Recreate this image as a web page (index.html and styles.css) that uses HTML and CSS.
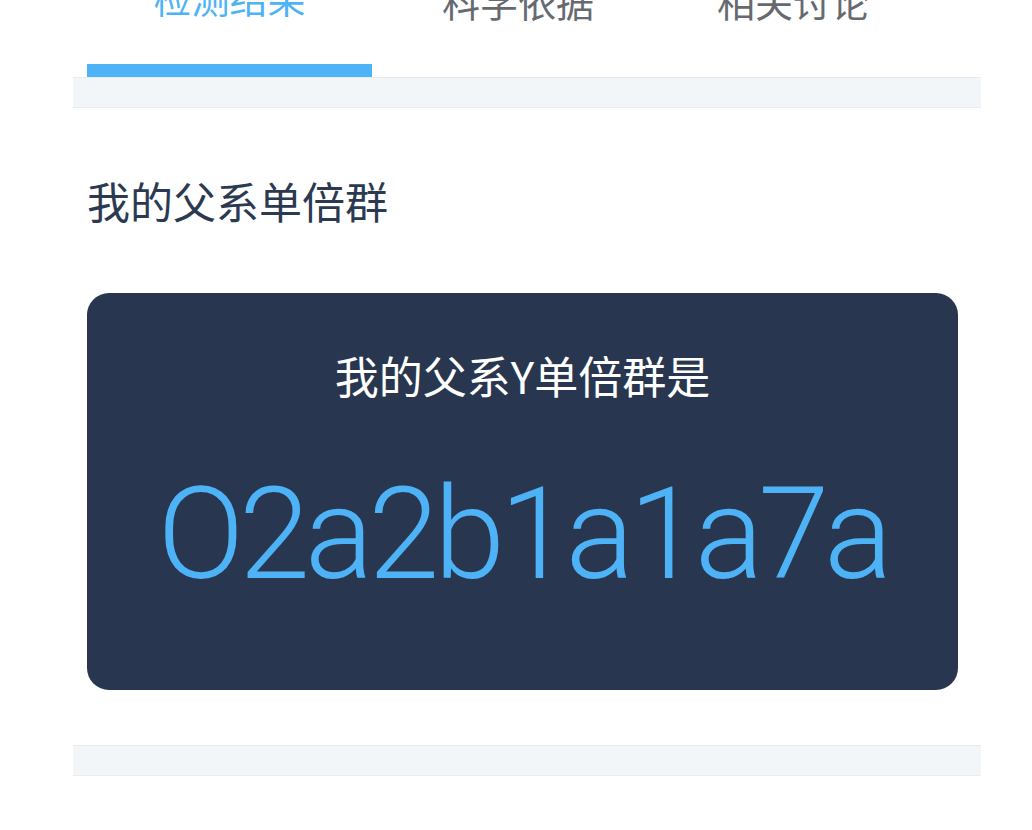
FILE: index.html
```html
<!DOCTYPE html>
<html lang="zh">
<head>
<meta charset="utf-8">
<title>检测结果</title>
<link rel="stylesheet" href="styles.css">
</head>
<body>
<div class="page">
  <nav class="tabs">
    <div class="tab tab-result active"><span class="label">检测结果</span></div>
    <div class="tab tab-science"><span class="label">科学依据</span></div>
    <div class="tab tab-discuss"><span class="label">相关讨论</span></div>
  </nav>
  <div class="band"></div>
  <section class="result">
    <h2 class="title">我的父系单倍群</h2>
    <div class="card">
      <div class="card-caption">我的父系Y单倍群是</div>
      <div class="card-value">O2a2b1a1a7a</div>
    </div>
  </section>
  <div class="band band-bottom"></div>
</div>
</body>
</html>
```
FILE: styles.css
```css
html, body {
  margin: 0;
  padding: 0;
  background: #ffffff;
  overflow: hidden;
}
body {
  font-family: "Noto Sans CJK SC", "Noto Sans", sans-serif;
}
.page {
  width: 908px;
  margin-left: 73px;
}
.tabs {
  display: flex;
  margin: -18px 0 0 14px;
}
.tab {
  text-align: center;
  padding-bottom: 44px;
  border-bottom: 13px solid transparent;
  color: #666a70;
  font-size: 38px;
}
.tab-result { width: 285px; }
.tab-science { width: 292px; }
.tab-discuss { width: 258px; }
.tab .label {
  display: block;
  height: 38px;
  line-height: 38px;
}
.tab.active {
  color: #4db3f6;
  border-bottom-color: #4db3f6;
}
.tab.active .label {
  line-height: 30px;
}
.band {
  height: 29px;
  background: #f3f6f9;
  border-top: 1px solid #e8ecf0;
  border-bottom: 1px solid #e8ecf0;
}
.result {
  padding: 71px 23px 55px 14px;
}
.title {
  margin: 0 0 71px 0;
  font-size: 43px;
  line-height: 43px;
  font-weight: 400;
  color: #2c3a51;
}
.card {
  background: #28374f;
  border-radius: 22px;
  padding: 61px 0 92px;
  text-align: center;
}
.card-caption {
  font-size: 44px;
  line-height: 43px;
  color: #ffffff;
}
.card-value {
  margin-top: 73px;
  font-family: Roboto, "Noto Sans", sans-serif;
  font-weight: 300;
  font-size: 128px;
  line-height: 128px;
  letter-spacing: -5.2px;
  color: #4db3f6;
}
```
